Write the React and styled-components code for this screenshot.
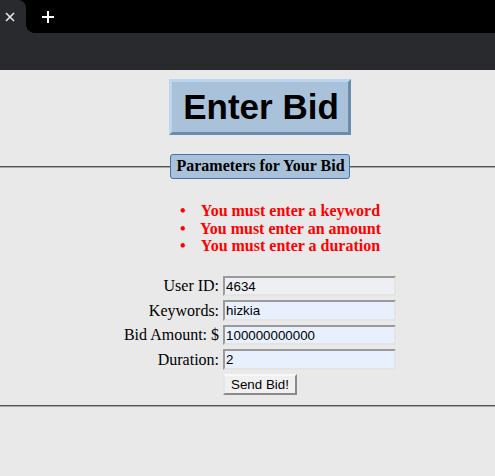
import React from "react";
import styled, { createGlobalStyle } from "styled-components";

const GlobalStyle = createGlobalStyle`
  html, body {
    margin: 0;
    padding: 0;
    background: #e9e9e9;
    overflow: hidden;
  }
  body {
    font-family: "Liberation Serif", "Times New Roman", serif;
    font-size: 16px;
    color: #000;
  }
`;

const TabStrip = styled.div`
  height: 33px;
  background: #000;
  display: flex;
  align-items: stretch;
`;

const Tab = styled.div`
  position: relative;
  width: 26px;
  background: #292a2d;
  border-top-right-radius: 8px;
  display: flex;
  align-items: center;
  justify-content: center;
  padding-right: 6px;
  box-sizing: border-box;
  &::after {
    content: "";
    position: absolute;
    right: -8px;
    bottom: 0;
    width: 8px;
    height: 8px;
    background: radial-gradient(circle at 100% 0, transparent 7.5px, #292a2d 8px);
  }
`;

const NewTab = styled.div`
  display: flex;
  align-items: center;
  margin-left: 15px;
`;

const Toolbar = styled.div`
  height: 37px;
  background: #292a2d;
`;

const Page = styled.div`
  width: 520px;
  padding-top: 9px;
`;

const TitleRow = styled.div`
  display: flex;
  justify-content: center;
`;

const Title = styled.h1`
  margin: 0;
  font-family: "Liberation Sans", Arial, sans-serif;
  font-weight: bold;
  font-size: 35px;
  line-height: 42px;
  padding: 4px 9px 4px 11px;
  background: #a9c1d9;
  border-style: solid;
  border-width: 3px;
  border-color: #bcd6ef #6c8cad #6c8cad #bcd6ef;
`;

const Fieldset = styled.fieldset`
  margin: 19px -10px 0;
  padding: 0 0 7px;
  border: 2px groove #a8a8a8;
  min-width: 0;
`;

const Legend = styled.legend`
  margin: 0 auto;
  padding: 2px 4px 3px 5px;
  background: #a9c1d9;
  border: 1px solid #4671a9;
  border-radius: 3px;
  font-weight: bold;
  font-size: 16px;
  line-height: 18px;
`;

const ErrorList = styled.ul`
  margin: 23px 0 18px 188px;
  padding: 0;
  list-style: none;
  color: #f00;
  font-weight: bold;
  line-height: 17.6px;
`;

const ErrorItem = styled.li`
  display: grid;
  grid-template-columns: 19px 183px;
`;

const Bullet = styled.span`
  text-align: left;
`;

const ErrorText = styled.span`
  text-align: center;
  white-space: nowrap;
`;

const FormTable = styled.table`
  margin: 0 auto;
  border-spacing: 2px;
`;

const LabelCell = styled.td`
  padding: 1px;
  text-align: right;
  white-space: nowrap;
`;

const FieldCell = styled.td`
  padding: 1px;
`;

const TextInput = styled.input`
  display: block;
  box-sizing: border-box;
  width: 173px;
  height: 20.5px;
  margin: 0;
  padding: 1px 2px 1px 1px;
  font-family: "Liberation Sans", Arial, sans-serif;
  font-size: 13.33px;
  color: #000;
  background: ${(p) => (p.$muted ? "#eeeff3" : "#e8f0fe")};
  border-style: solid;
  border-width: 2px;
  border-color: #9a9a9a #e4e4e4 #e4e4e4 #9a9a9a;
  outline: none;
`;

const SendButton = styled.button`
  display: block;
  box-sizing: border-box;
  height: 21px;
  margin: 0;
  padding: 1px 6px;
  font-family: "Liberation Sans", Arial, sans-serif;
  font-size: 13.33px;
  color: #000;
  background: #f0f0f0;
  border-style: solid;
  border-width: 2px;
  border-color: #f7f7f7 #8a8a8a #8a8a8a #e6e6e6;
`;

const fields = [
  { label: "User ID:", value: "4634", muted: true },
  { label: "Keywords:", value: "hizkia" },
  { label: "Bid Amount: $", value: "100000000000" },
  { label: "Duration:", value: "2" },
];

const errors = [
  "You must enter a keyword",
  "You must enter an amount",
  "You must enter a duration",
];

export default function App() {
  return (
    <>
      <GlobalStyle />
      <TabStrip>
        <Tab>
          <svg width="10" height="10" viewBox="0 0 10 10">
            <path d="M1 1L9 9M9 1L1 9" stroke="#e8e8e8" strokeWidth="1.6" />
          </svg>
        </Tab>
        <NewTab>
          <svg width="14" height="14" viewBox="0 0 14 14">
            <path d="M7 1V13M1 7H13" stroke="#fff" strokeWidth="2" />
          </svg>
        </NewTab>
      </TabStrip>
      <Toolbar />
      <Page>
        <TitleRow>
          <Title>Enter Bid</Title>
        </TitleRow>
        <Fieldset>
          <Legend>Parameters for Your Bid</Legend>
          <ErrorList>
            {errors.map((e) => (
              <ErrorItem key={e}>
                <Bullet>•</Bullet>
                <ErrorText>{e}</ErrorText>
              </ErrorItem>
            ))}
          </ErrorList>
          <form onSubmit={(ev) => ev.preventDefault()}>
            <FormTable>
              <tbody>
                {fields.map((f) => (
                  <tr key={f.label}>
                    <LabelCell>{f.label}</LabelCell>
                    <FieldCell>
                      <TextInput
                        $muted={f.muted}
                        defaultValue={f.value}
                        readOnly={f.muted}
                      />
                    </FieldCell>
                  </tr>
                ))}
                <tr>
                  <LabelCell />
                  <FieldCell>
                    <SendButton type="submit">Send Bid!</SendButton>
                  </FieldCell>
                </tr>
              </tbody>
            </FormTable>
          </form>
        </Fieldset>
      </Page>
    </>
  );
}
